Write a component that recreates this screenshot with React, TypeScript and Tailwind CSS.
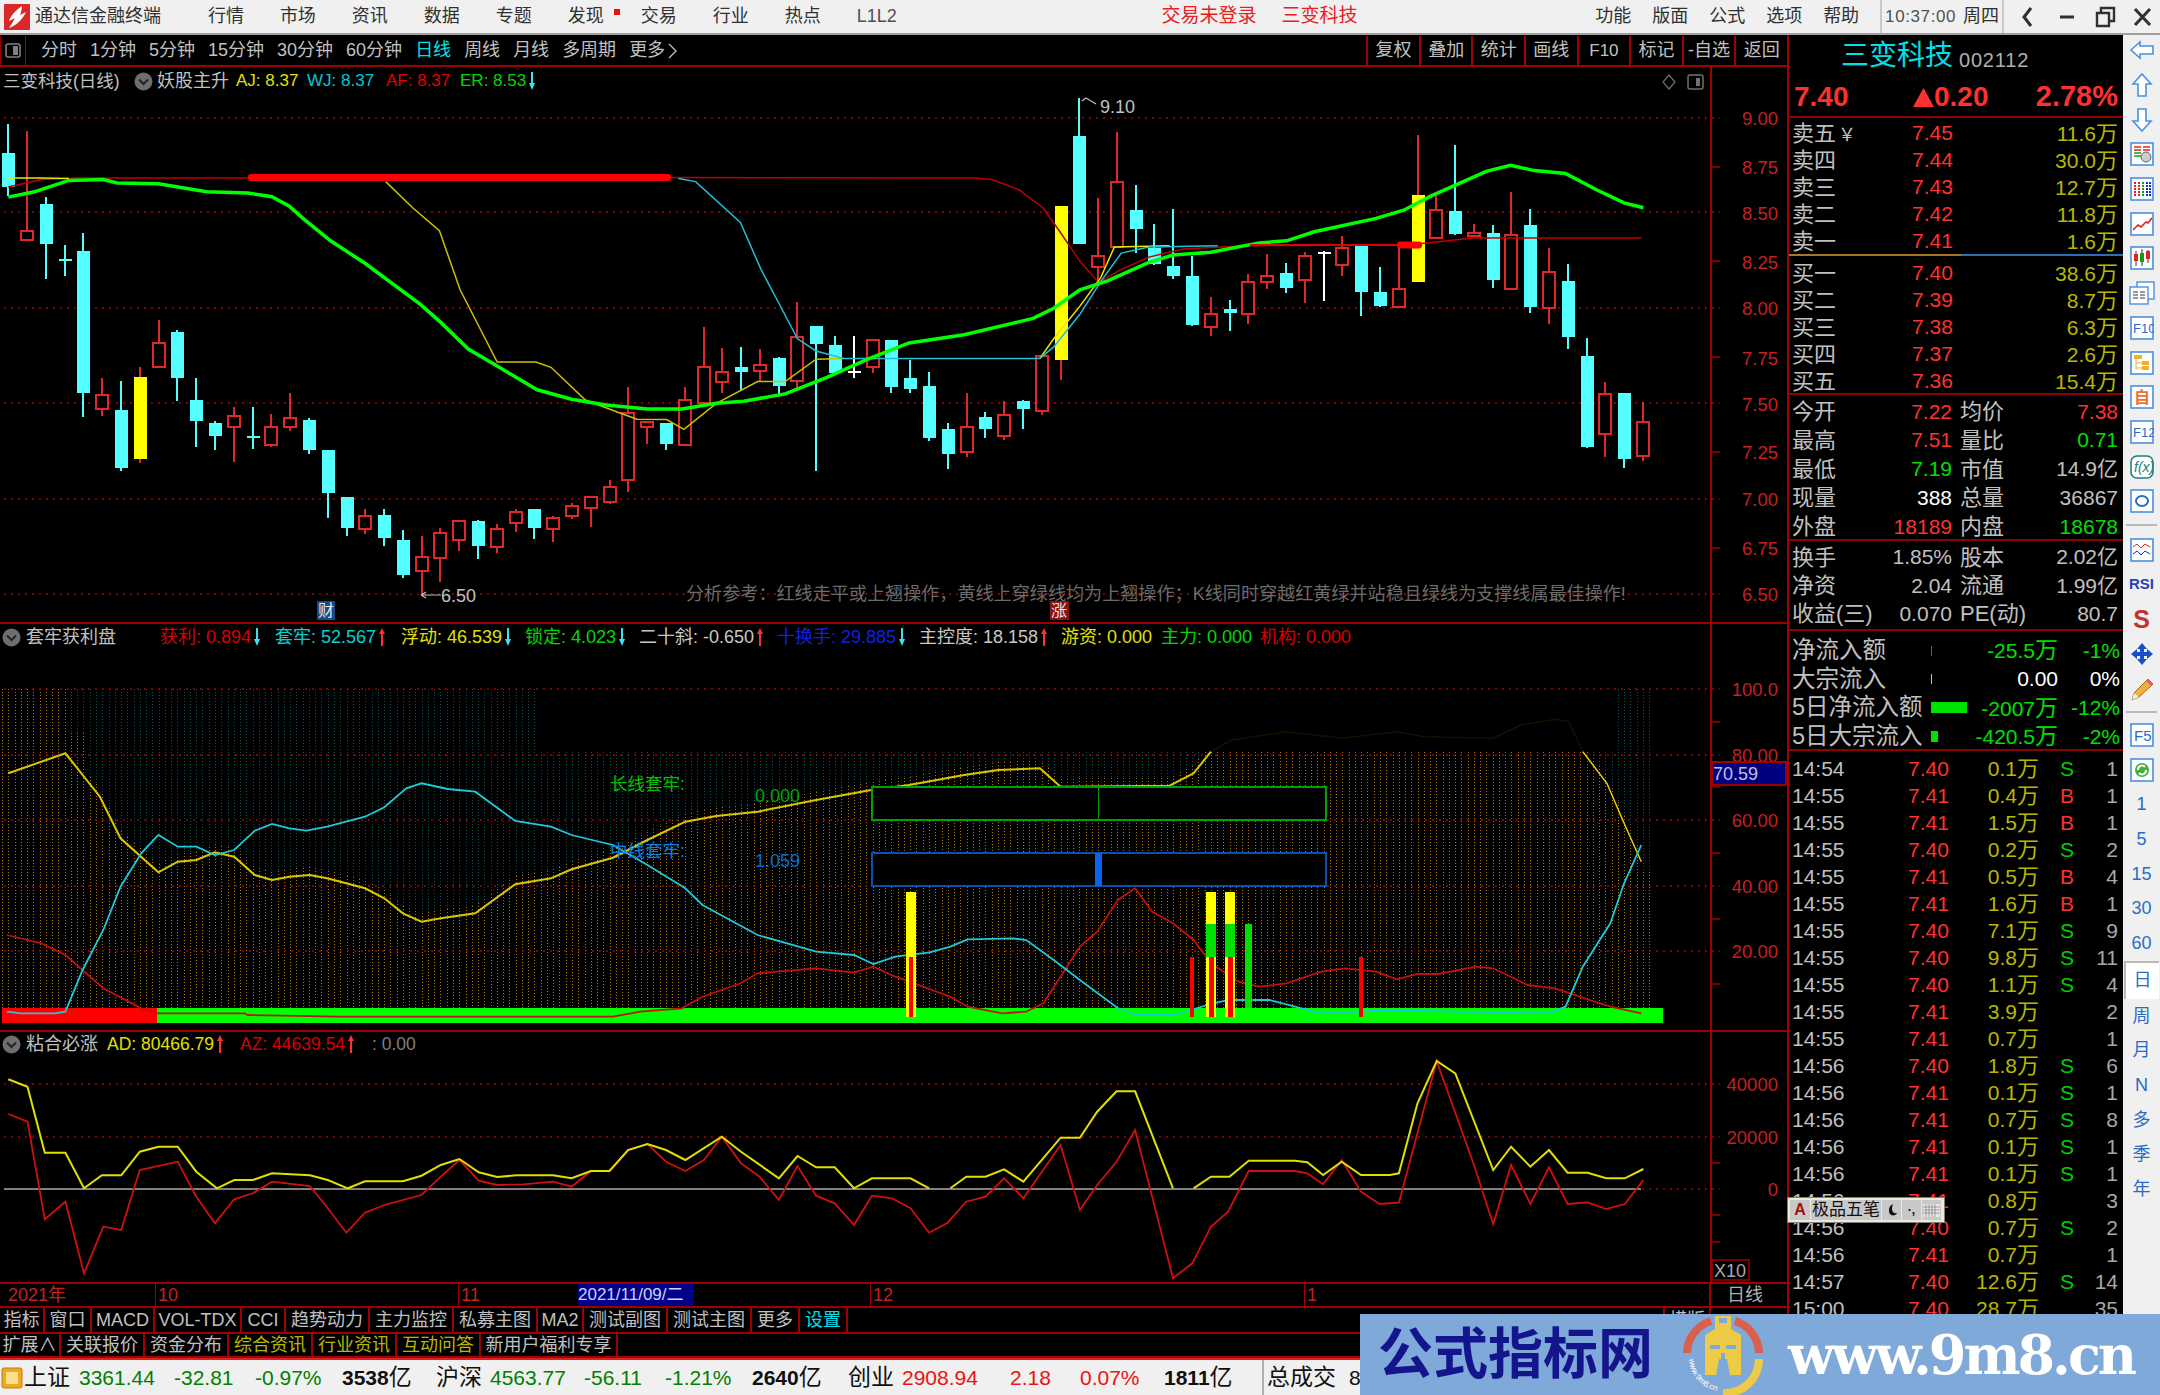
import React from 'react';

type Pt = [number, number];

const RED = '#a00000';
const STEP = 18.79;
const candleX = (i: number) => 8.3 + STEP * i;

// picked off the zoomed reference: x was shrunk by 1.452
const poly = (left: Pt[], right: Pt[], mapY: (y: number) => number) =>
    [
        ...left.map(([x, y]) => `${(x / 1.452).toFixed(1)},${mapY(y).toFixed(1)}`),
        ...right.map(([x, y]) => `${(1080 + x / 1.452).toFixed(1)},${mapY(y).toFixed(1)}`),
    ].join(' ');

const mainY = (y: number) => y / 2.45;
const subY = (y: number) => 620 + y / 3;
const lowY = (y: number) => 1030 + y / 3;

// type, high, body top, body bottom, low
const candles: [string, number, number, number, number][] = [
    ['c', 305, 375, 458, 480], ['r', 322, 567, 587, 587], ['c', 482, 500, 598, 683], ['c', 600, 635, 638, 677],
    ['c', 570, 614, 963, 1022], ['r', 926, 968, 1002, 1018], ['c', 934, 1004, 1147, 1153], ['y', 900, 923, 1125, 1135],
    ['r', 783, 840, 900, 900], ['c', 808, 813, 926, 982], ['c', 927, 979, 1032, 1095], ['c', 1032, 1037, 1069, 1103],
    ['r', 996, 1020, 1047, 1132], ['c', 996, 1067, 1070, 1100], ['r', 1015, 1046, 1090, 1094], ['r', 964, 1024, 1047, 1055],
    ['c', 1024, 1030, 1102, 1113], ['c', 1103, 1103, 1209, 1268], ['c', 1217, 1217, 1294, 1312], ['r', 1247, 1263, 1297, 1308],
    ['c', 1247, 1261, 1319, 1338], ['c', 1298, 1324, 1408, 1415], ['r', 1313, 1365, 1399, 1455], ['r', 1293, 1306, 1366, 1425],
    ['r', 1275, 1277, 1322, 1350], ['c', 1275, 1276, 1338, 1370], ['r', 1285, 1296, 1340, 1356], ['r', 1248, 1254, 1281, 1304],
    ['c', 1247, 1247, 1294, 1320], ['r', 1265, 1270, 1297, 1327], ['r', 1232, 1240, 1264, 1272], ['r', 1215, 1218, 1244, 1290],
    ['r', 1177, 1193, 1229, 1235], ['r', 948, 1012, 1175, 1205], ['r', 1035, 1035, 1047, 1088], ['c', 1036, 1037, 1088, 1102],
    ['r', 948, 980, 1090, 1093], ['r', 802, 899, 988, 990], ['r', 853, 912, 936, 962], ['c', 850, 900, 911, 955],
    ['r', 855, 894, 910, 937], ['c', 875, 876, 945, 965], ['r', 740, 825, 933, 950], ['c', 798, 798, 842, 1153],
    ['c', 823, 846, 915, 917], ['w', 823, 908, 911, 925], ['r', 832, 832, 900, 915], ['c', 832, 832, 948, 962],
    ['c', 882, 927, 952, 962], ['c', 912, 945, 1074, 1080], ['c', 1037, 1052, 1113, 1150], ['r', 964, 1046, 1108, 1120],
    ['c', 1010, 1022, 1051, 1073], ['r', 982, 1016, 1068, 1078], ['c', 980, 982, 1003, 1050], ['r', 872, 873, 1006, 1017],
    ['y', 504, 504, 882, 930], ['c', 240, 332, 598, 598], ['r', 485, 627, 655, 690], ['r', 323, 446, 605, 607],
    ['c', 453, 515, 562, 620], ['c', 548, 607, 647, 650], ['c', 512, 651, 677, 683], ['c', 627, 677, 797, 798],
    ['r', 728, 769, 800, 822], ['c', 735, 758, 768, 812], ['r', 672, 692, 770, 793], ['r', 622, 677, 690, 708],
    ['c', 645, 670, 706, 717], ['r', 617, 627, 685, 742], ['w', 615, 617, 620, 738], ['r', 577, 608, 650, 675],
    ['c', 602, 603, 716, 775], ['c', 655, 716, 750, 752], ['r', 600, 708, 752, 752], ['y', 330, 478, 690, 690],
    ['r', 478, 515, 583, 585], ['c', 356, 518, 573, 575], ['r', 548, 570, 578, 580], ['c', 552, 570, 686, 705],
    ['r', 470, 575, 708, 708], ['c', 512, 552, 753, 768], ['r', 608, 667, 755, 793], ['c', 648, 688, 826, 855],
    ['c', 828, 872, 1095, 1098], ['r', 937, 965, 1063, 1120], ['c', 964, 964, 1124, 1146], ['r', 985, 1035, 1118, 1130],
];

const greenL: Pt[] = [[12, 483], [50, 470], [100, 442], [150, 440], [170, 448], [230, 450], [300, 470], [360, 473], [395, 482], [420, 505], [440, 535], [480, 590], [530, 645], [610, 745], [640, 790], [680, 855], [720, 895], [780, 955], [830, 978], [880, 992], [940, 1002], [990, 1002], [1040, 988], [1080, 983], [1140, 965], [1200, 925], [1260, 880], [1320, 840], [1400, 820], [1500, 780], [1530, 755], [1568, 710]];
const greenR: Pt[] = [[40, 688], [100, 643], [135, 625], [190, 618], [260, 595], [300, 590], [340, 568], [430, 535], [470, 515], [510, 480], [550, 450], [590, 420], [625, 405], [660, 418], [705, 425], [750, 465], [790, 497], [818, 509]];
const redThinL: Pt[] = [[12, 458], [60, 440], [110, 436], [970, 435], [1415, 436], [1440, 440], [1480, 465], [1515, 510], [1540, 570], [1568, 640]];
const redThinR: Pt[] = [[27, 692], [60, 660], [100, 630], [150, 610], [240, 602], [460, 600], [505, 595], [570, 583], [815, 583]];
const yelMainL: Pt[] = [[12, 436], [60, 436], [100, 437]];
const yelMain2L: Pt[] = [[560, 445], [600, 510], [638, 565], [668, 710], [722, 887], [778, 887], [800, 900], [850, 980], [905, 1015], [925, 1027], [968, 1028], [993, 1052], [1040, 988], [1100, 935], [1140, 935], [1185, 880], [1225, 878]];
const yelMain3L: Pt[] = [[1510, 878], [1530, 830], [1568, 750]];
const yelMain3R: Pt[] = [[30, 680], [50, 605], [130, 602]];
const cyanMainL: Pt[] = [[985, 437], [1010, 445], [1075, 545], [1105, 660], [1130, 740], [1158, 830], [1185, 860], [1225, 878], [1510, 878], [1530, 850], [1568, 770]];
const cyanMainR: Pt[] = [[30, 690], [60, 620], [100, 605], [200, 602]];

const subYellowL: Pt[] = [[12, 460], [95, 400], [145, 530], [175, 655], [230, 757], [258, 725], [285, 720], [312, 697], [340, 710], [370, 765], [395, 780], [420, 770], [450, 765], [475, 775], [530, 805], [558, 835], [585, 880], [612, 905], [640, 895], [690, 880], [748, 793], [800, 775], [830, 748], [890, 713], [940, 660], [995, 605], [1040, 588], [1100, 575], [1185, 540], [1265, 510], [1320, 495], [1400, 465], [1450, 450], [1510, 445], [1540, 500]];
const subYellowR: Pt[] = [[130, 497], [165, 460], [190, 395]];
const subDarkR: Pt[] = [[190, 395], [220, 360], [300, 335], [380, 355], [460, 335], [500, 350], [600, 355], [640, 315], [690, 298], [710, 305], [730, 395]];
const subYellowR2: Pt[] = [[730, 395], [765, 490], [790, 610], [815, 725]];
const subCyanL: Pt[] = [[10, 1175], [30, 1180], [80, 1180], [95, 1175], [120, 1050], [150, 930], [175, 800], [205, 700], [230, 645], [258, 680], [285, 680], [312, 705], [340, 690], [370, 632], [395, 612], [420, 625], [445, 632], [475, 620], [530, 590], [558, 562], [590, 505], [612, 490], [650, 507], [690, 515], [748, 603], [800, 620], [830, 645], [890, 675], [940, 735], [995, 805], [1020, 855], [1100, 945], [1185, 995], [1240, 1005], [1268, 1032], [1300, 1010], [1350, 997], [1380, 980], [1405, 958], [1470, 955], [1490, 960], [1530, 1020], [1568, 1080]];
const subCyanR: Pt[] = [[55, 1165], [80, 1183], [140, 1183], [185, 1155], [215, 1140], [275, 1140], [350, 1180], [450, 1170], [540, 1175], [680, 1180], [705, 1160], [730, 1040], [770, 910], [790, 790], [815, 675]];
const subRedL: Pt[] = [[10, 945], [60, 970], [95, 1005], [150, 1105], [205, 1165], [230, 1180], [355, 1180], [360, 1185], [490, 1190], [890, 1190], [930, 1175], [990, 1165], [1020, 1130], [1075, 1090], [1100, 1060], [1185, 1045], [1240, 1058], [1268, 1040], [1300, 1070], [1340, 1100], [1380, 1130], [1405, 1160], [1455, 1180], [1490, 1175], [1515, 1150], [1568, 980]];
const subRedR: Pt[] = [[25, 935], [55, 840], [80, 805], [105, 875], [135, 910], [165, 960], [190, 1030], [230, 1085], [260, 1100], [300, 1090], [350, 1055], [385, 1045], [430, 1055], [460, 1078], [490, 1062], [520, 1062], [575, 1040], [600, 1045], [650, 1095], [690, 1105], [740, 1140], [770, 1160], [815, 1180]];

const lowYellowL: Pt[] = [[12, 148], [40, 170], [65, 368], [95, 368], [122, 475], [148, 436], [176, 436], [203, 365], [230, 350], [258, 350], [285, 425], [315, 475], [340, 450], [367, 450], [395, 430], [450, 436], [476, 450], [505, 475], [530, 454], [585, 454], [612, 437], [640, 405], [667, 387], [695, 427], [722, 441], [750, 436], [803, 436], [830, 445], [858, 423], [885, 423], [912, 360], [940, 342], [967, 360], [995, 390], [1048, 320], [1076, 365], [1131, 445], [1158, 378], [1185, 412], [1212, 412], [1240, 475], [1266, 445], [1322, 445], [1349, 475]];
const lowYellowM: Pt[] = [[1380, 475], [1403, 440], [1431, 440], [1458, 418], [1486, 455], [1540, 323], [1568, 323]];
const lowYellowR: Pt[] = [[25, 245], [53, 184], [80, 184], [135, 475]];
const lowYellowR2: Pt[] = [[165, 475], [190, 440], [217, 440], [245, 392], [312, 392], [330, 397], [353, 435], [380, 395], [408, 435], [450, 435], [463, 430], [490, 220], [518, 93], [545, 130], [600, 420], [626, 350], [654, 410], [681, 360], [708, 428], [737, 428], [764, 445], [791, 445], [818, 417]];
const lowRedL: Pt[] = [[12, 252], [40, 275], [65, 568], [95, 515], [122, 730], [150, 590], [176, 600], [203, 420], [258, 395], [285, 500], [312, 580], [340, 508], [367, 490], [395, 455], [450, 468], [476, 535], [503, 608], [530, 548], [558, 525], [612, 495], [640, 440], [667, 390], [695, 452], [722, 465], [760, 463], [803, 455], [830, 470], [858, 423], [885, 423], [912, 360], [940, 342], [967, 395], [995, 423], [1022, 390], [1048, 320], [1076, 400], [1103, 440], [1131, 510], [1158, 408], [1185, 497], [1212, 520], [1240, 585], [1266, 497], [1295, 505], [1322, 535], [1349, 608], [1376, 578], [1403, 515], [1431, 500], [1458, 445], [1486, 505], [1540, 345], [1568, 540]];
const lowRedR: Pt[] = [[25, 465], [53, 395], [80, 300], [135, 745], [163, 700], [190, 590], [215, 545], [245, 423], [312, 423], [330, 430], [353, 463], [380, 390], [408, 485], [435, 522], [463, 518], [518, 93], [573, 410], [600, 583], [626, 405], [654, 522], [681, 412], [708, 522], [737, 517], [764, 537], [791, 522], [818, 450]];

// yellow line of the middle panel in page coords, the bars stop at it
const subYellowAll: Pt[] = [
    ...subYellowL.map(([x, y]): Pt => [x / 1.452, subY(y)]),
    ...[...subYellowR, ...subDarkR, ...subYellowR2].map(([x, y]): Pt => [1080 + x / 1.452, subY(y)]),
];

const yellowAt = (x: number) => {
    for (let i = 1; i < subYellowAll.length; i++) {
        const [x0, y0] = subYellowAll[i - 1];
        const [x1, y1] = subYellowAll[i];
        if (x <= x1) return y0 + ((y1 - y0) * (x - x0)) / Math.max(x1 - x0, 1);
    }
    return 880;
};

const barColumns = Array.from({ length: 88 * 3 }, (_, n) => {
    const x = Math.round(candleX(Math.floor(n / 3)) + ((n % 3) - 1) * 6.26) + 0.5;
    let top = Math.round(Math.max(752, yellowAt(x) - 8));
    if (x < 70) top = 689;
    else if (x < 88) top = 733;
    let tealTop = 752;
    if (x < 537 || x > 1618) tealTop = 689;
    return { x, top, tealTop: x > 1590 && x < 1618 ? 752 : tealTop };
});

const Grid = ({ ys, ticks }: { ys: number[]; ticks: number[] }) => (
    <g>
        {ys.map(y => (
            <line key={y} x1={4} x2={1720} y1={y} y2={y} stroke="#b00000" strokeWidth={1.5} strokeDasharray="2 5" />
        ))}
        {ticks.map(y => (
            <line key={y} x1={1711} x2={1720} y1={y} y2={y} stroke={RED} strokeWidth={1.5} />
        ))}
        <line x1={1711} x2={1711} y1={0} y2={1400} stroke={RED} strokeWidth={2} />
    </g>
);

const AxisLabels = ({ items }: { items: [string, number][] }) => (
    <g fill="#c42020" fontSize={18.5} textAnchor="end">
        {items.map(([t, y]) => (
            <text key={t} x={1778} y={y + 7}>{t}</text>
        ))}
    </g>
);

const Arrow = ({ up }: { up?: boolean }) => (
    <svg width="8" height="20" viewBox="0 0 8 20" className="shrink-0 ml-[2px]">
        {up ? (
            <path d="M4 1 L7 7 H5 V19 H3 V7 H1 Z" fill="#ff3030" />
        ) : (
            <path d="M4 19 L7 12 H5 V1 H3 V12 H1 Z" fill="#40e0f0" />
        )}
    </svg>
);

const Collapse = () => (
    <svg width="19" height="19" viewBox="0 0 19 19" className="shrink-0">
        <circle cx="9.5" cy="9.5" r="9" fill="#6e6e6e" />
        <path d="M5 7.5 L9.5 12 L14 7.5" fill="none" stroke="#222" strokeWidth="2" />
    </svg>
);

const MainChart = () => (
    <svg width="1787" height="555" viewBox="0 67 1787 555" className="block">
        <Grid ys={[118, 212, 308, 403, 499, 594]} ticks={[167, 261, 357, 452, 548]} />
        <AxisLabels items={[['9.00', 118], ['8.75', 167], ['8.50', 213], ['8.25', 262], ['8.00', 308], ['7.75', 358], ['7.50', 404], ['7.25', 452], ['7.00', 499], ['6.75', 548], ['6.50', 594]]} />
        <g shapeRendering="crispEdges">
            {candles.map(([t, hi, top, bot, lo], i) => {
                const x = Math.round(candleX(i));
                const color = t === 'c' ? '#55ffff' : t === 'y' ? '#ffff00' : t === 'w' ? '#ffffff' : '#e02828';
                return (
                    <g key={i}>
                        <line x1={x} x2={x} y1={mainY(hi)} y2={mainY(lo)} stroke={t === 'y' ? '#e02828' : color} strokeWidth={1.5} />
                        {t === 'r' ? (
                            <rect x={x - 6} y={mainY(top)} width={12} height={mainY(bot) - mainY(top)} fill="#000" stroke={color} strokeWidth={2} />
                        ) : (
                            <rect x={x - 6.5} y={mainY(top)} width={13} height={Math.max(mainY(bot) - mainY(top), 2)} fill={color} />
                        )}
                    </g>
                );
            })}
        </g>
        <polyline points={poly(redThinL, redThinR, mainY)} fill="none" stroke="#c00000" strokeWidth={1.5} />
        <polyline points={poly(yelMainL, [], mainY)} fill="none" stroke="#e8e800" strokeWidth={1.5} />
        <polyline points={poly(yelMain2L, [], mainY)} fill="none" stroke="#d0c000" strokeWidth={1.5} />
        <polyline points={poly(yelMain3L, yelMain3R, mainY)} fill="none" stroke="#e8e800" strokeWidth={1.5} />
        <polyline points={poly(cyanMainL, cyanMainR, mainY)} fill="none" stroke="#20c0d8" strokeWidth={1.5} />
        <polyline points={poly(greenL, greenR, mainY)} fill="none" stroke="#00ff00" strokeWidth={3.5} />
        <rect x={248} y={174} width={423} height={7} rx={3} fill="#ff0000" />
        <rect x={1397} y={241.5} width={25} height={7} rx={3} fill="#ff0000" />
        <rect x={1250} y={244} width={147} height={2} fill="#e00000" />
        <path d="M1082 101 l4 -3 l10 6" fill="none" stroke="#c0c0c0" strokeWidth={1.2} />
        <text x={1100} y={113} fontSize={18} fill="#c0c0c0">9.10</text>
        <path d="M421 595 h20 M421 595 l5 -3 M421 595 l5 3" fill="none" stroke="#c0c0c0" strokeWidth={1.2} />
        <text x={441} y={602} fontSize={18} fill="#c0c0c0">6.50</text>
        <text x={686} y={600} fontSize={18.1} fill="#6b6b6b">分析参考：红线走平或上翘操作，黄线上穿绿线均为上翘操作；K线同时穿越红黄绿并站稳且绿线为支撑线属最佳操作!</text>
        <rect x={317} y={601} width={18} height={19} fill="#174a86" />
        <text x={318} y={616} fontSize={16} fill="#e8e8e8">财</text>
        <rect x={1050} y={601} width={19} height={19} fill="#8a1414" />
        <text x={1051} y={616} fontSize={16} fill="#e8e8e8">涨</text>
        <path d="M1669 75 l6 7 l-6 7 l-6 -7 Z" fill="none" stroke="#707070" strokeWidth={1.2} />
        <rect x={1688} y={75} width={15} height={14} rx={2} fill="none" stroke="#707070" strokeWidth={1.5} />
        <rect x={1696} y={78} width={4} height={8} fill="#707070" />
    </svg>
);

const SubChart = () => (
    <svg width="1787" height="406" viewBox="0 624 1787 406" className="block">
        <g shapeRendering="crispEdges">
            {barColumns.map(b => (
                <g key={b.x}>
                    <line x1={b.x} x2={b.x} y1={b.tealTop} y2={b.top} stroke="#0f5454" strokeWidth={1} strokeDasharray="1 2" />
                    <line x1={b.x} x2={b.x} y1={b.top} y2={1008} stroke="#b07400" strokeWidth={1} strokeDasharray="1 2" />
                </g>
            ))}
        </g>
        <Grid ys={[689, 755, 820, 886, 951]} ticks={[722, 787, 853, 919, 984]} />
        <AxisLabels items={[['100.0', 689], ['80.00', 755], ['60.00', 820], ['40.00', 886], ['20.00', 951]]} />
        <g shapeRendering="crispEdges">
            <rect x={2} y={1008} width={155} height={15} fill="#ff0000" />
            <rect x={157} y={1008} width={1506} height={15} fill="#00ff00" />
        </g>
        <polyline points={poly(subYellowL, subYellowR, subY)} fill="none" stroke="#d8c800" strokeWidth={2} />
        <polyline points={poly([], subDarkR, subY)} fill="none" stroke="#121200" strokeWidth={1.5} />
        <polyline points={poly([], subYellowR2, subY)} fill="none" stroke="#e0d000" strokeWidth={1.5} />
        <polyline points={poly(subRedL, subRedR, subY)} fill="none" stroke="#c01010" strokeWidth={1.8} />
        <polyline points={poly(subCyanL, subCyanR, subY)} fill="none" stroke="#20c8d8" strokeWidth={1.8} />
        <g shapeRendering="crispEdges">
            <rect x={906} y={892} width={10} height={125} fill="#ffff00" />
            <rect x={909} y={957} width={4} height={60} fill="#ff0000" />
            <rect x={1206} y={892} width={10} height={125} fill="#ffff00" />
            <rect x={1206} y={924} width={10} height={33} fill="#00e000" />
            <rect x={1209} y={957} width={5} height={60} fill="#ff0000" />
            <rect x={1225} y={892} width={10} height={125} fill="#ffff00" />
            <rect x={1225} y={924} width={10} height={33} fill="#00e000" />
            <rect x={1228} y={957} width={5} height={60} fill="#ff0000" />
            <rect x={1245} y={924} width={7} height={84} fill="#00e000" />
            <rect x={1190} y={957} width={4} height={60} fill="#ff0000" />
            <rect x={1359} y={957} width={4} height={60} fill="#ff0000" />
            <rect x={872} y={787} width={454} height={33} fill="#000" stroke="#00a000" strokeWidth={2} />
            <rect x={1098} y={787} width={1} height={33} fill="#00a000" />
            <rect x={872} y={853} width={454} height={33} fill="#000" stroke="#0a50b0" strokeWidth={2} />
            <rect x={1095} y={853} width={7} height={33} fill="#0a64f0" />
            <rect x={1712} y={762} width={74} height={23} fill="#000080" stroke={RED} strokeWidth={1.5} />
        </g>
        <text x={1713} y={780} fontSize={18} fill="#c0c0e0">70.59</text>
        <text x={610} y={790} fontSize={17.5} fill="#00c000">长线套牢:</text>
        <text x={610} y={857} fontSize={17.5} fill="#0a80e0">中线套牢:</text>
        <text x={755} y={802} fontSize={18} fill="#00a800">0.000</text>
        <text x={755} y={867} fontSize={18} fill="#0a6cc8">1.059</text>
    </svg>
);

const LowChart = () => (
    <svg width="1787" height="250" viewBox="0 1032 1787 250" className="block">
        <Grid ys={[1084, 1137, 1189]} ticks={[1163, 1215, 1242]} />
        <AxisLabels items={[['40000', 1084], ['20000', 1137], ['0', 1189]]} />
        <line x1={4} x2={1641} y1={1189} y2={1189} stroke="#808080" strokeWidth={2} />
        <polyline points={poly(lowRedL, lowRedR, lowY)} fill="none" stroke="#d01010" strokeWidth={1.8} />
        <polyline points={poly(lowYellowL, [], lowY)} fill="none" stroke="#e0e000" strokeWidth={2} />
        <polyline points={poly(lowYellowM, lowYellowR, lowY)} fill="none" stroke="#e0e000" strokeWidth={2} />
        <polyline points={poly([], lowYellowR2, lowY)} fill="none" stroke="#e0e000" strokeWidth={2} />
        <rect x={1712} y={1260} width={37} height={20} fill="#000" stroke={RED} strokeWidth={1.5} />
        <text x={1714} y={1277} fontSize={18} fill="#a8a8a8">X10</text>
    </svg>
);

const TABS_ONE = [
    { t: '指标', w: 'w-[45px]' }, { t: '窗口', w: 'w-[47px]' }, { t: 'MACD', w: 'w-[63px]' }, { t: 'VOL-TDX', w: 'w-[87px]' },
    { t: 'CCI', w: 'w-[44px]' }, { t: '趋势动力', w: 'w-[84px]' }, { t: '主力监控', w: 'w-[84px]' }, { t: '私募主图', w: 'w-[84px]' },
    { t: 'MA2', w: 'w-[46px]' }, { t: '测试副图', w: 'w-[84px]' }, { t: '测试主图', w: 'w-[84px]' }, { t: '更多', w: 'w-[48px]' },
];

const TABS_TWO = [
    { t: '扩展∧', w: 'w-[61px]', c: 'text-[#c0c0c0]' }, { t: '关联报价', w: 'w-[84px]', c: 'text-[#c0c0c0]' },
    { t: '资金分布', w: 'w-[84px]', c: 'text-[#c0c0c0]' }, { t: '综合资讯', w: 'w-[84px]', c: 'text-[#b8b800]' },
    { t: '行业资讯', w: 'w-[84px]', c: 'text-[#b8b800]' }, { t: '互动问答', w: 'w-[84px]', c: 'text-[#b8b800]' },
    { t: '新用户福利专享', w: 'w-[137px]', c: 'text-[#c0c0c0]' },
];

const PERIODS = ['分时', '1分钟', '5分钟', '15分钟', '30分钟', '60分钟'];
const PERIODS_B = ['周线', '月线', '多周期'];
const TOOL_BTNS = ['复权', '叠加', '统计', '画线', 'F10', '标记', '-自选', '返回'];

const SELL: [string, string, string][] = [['卖五', '7.45', '11.6'], ['卖四', '7.44', '30.0'], ['卖三', '7.43', '12.7'], ['卖二', '7.42', '11.8'], ['卖一', '7.41', '1.6']];
const BUY: [string, string, string][] = [['买一', '7.40', '38.6'], ['买二', '7.39', '8.7'], ['买三', '7.38', '6.3'], ['买四', '7.37', '2.6'], ['买五', '7.36', '15.4']];

const TICKS: [string, string, string, string, string][] = [
    ['14:54', '7.40', '0.1', 'S', '1'], ['14:55', '7.41', '0.4', 'B', '1'], ['14:55', '7.41', '1.5', 'B', '1'],
    ['14:55', '7.40', '0.2', 'S', '2'], ['14:55', '7.41', '0.5', 'B', '4'], ['14:55', '7.41', '1.6', 'B', '1'],
    ['14:55', '7.40', '7.1', 'S', '9'], ['14:55', '7.40', '9.8', 'S', '11'], ['14:55', '7.40', '1.1', 'S', '4'],
    ['14:55', '7.41', '3.9', '', '2'], ['14:55', '7.41', '0.7', '', '1'], ['14:56', '7.40', '1.8', 'S', '6'],
    ['14:56', '7.41', '0.1', 'S', '1'], ['14:56', '7.41', '0.7', 'S', '8'], ['14:56', '7.41', '0.1', 'S', '1'],
    ['14:56', '7.41', '0.1', 'S', '1'], ['14:56', '7.41', '0.8', '', '3'], ['14:56', '7.40', '0.7', 'S', '2'],
    ['14:56', '7.41', '0.7', '', '1'], ['14:57', '7.40', '12.6', 'S', '14'], ['15:00', '7.40', '28.7', '', '35'],
];

const StatRow = ({ a, b, c, d, bc = 'text-[#ff3030]', dc = 'text-[#c0c0c0]', h = 'h-[28.8px]' }: { a: string; b: string; c: string; d: string; bc?: string; dc?: string; h?: string }) => (
    <div className={`flex items-center ${h} pt-[4px] pl-[3px] pr-[5px]`}>
        <span className="w-[100px] text-[22px] text-[#c0c0c0] whitespace-nowrap">{a}</span>
        <span className={`w-[60px] text-right text-[21px] ${bc}`}>{b}</span>
        <span className="ml-[8px] text-[22px] text-[#c0c0c0] whitespace-nowrap">{c}</span>
        <span className={`ml-auto text-[21px] whitespace-nowrap ${dc}`}>{d}</span>
    </div>
);

const Wan = ({ children }: { children: React.ReactNode }) => (
    <span>{children}<span className="text-[22px]">万</span></span>
);

const OrderRow = ({ r, tag }: { r: [string, string, string]; tag?: string }) => (
    <div className="flex items-center h-[27px] pt-[3px] pl-[3px] pr-[5px]">
        <span className="w-[120px] text-[22px] text-[#c0c0c0] whitespace-nowrap">
            {r[0]}{tag && <span className="text-[18px] ml-[2px]">{tag}</span>}
        </span>
        <span className="text-[21px] text-[#ff3030]">{r[1]}</span>
        <span className="ml-auto text-[21px] text-[#b8b800]"><Wan>{r[2]}</Wan></span>
    </div>
);

const FlowRow = ({ label, bar, val, pct, col }: { label: string; bar: React.ReactNode; val: React.ReactNode; pct: string; col: string }) => (
    <div className="flex items-center h-[28.7px] pt-[4px] pl-[3px] pr-[3px]">
        <span className="w-[139px] text-[23.5px] text-[#c0c0c0] whitespace-nowrap">{label}</span>
        <span className="w-[40px]">{bar}</span>
        <span className={`w-[87px] text-right text-[21px] whitespace-nowrap ${col}`}>{val}</span>
        <span className={`ml-auto text-[21px] ${col}`}>{pct}</span>
    </div>
);

const QuotePanel = () => (
    <div className="w-[336px] h-full shrink-0 border-l-2 border-[#a00000] bg-black overflow-hidden">
        <div className="flex items-end h-[42px] pl-[52px] pb-[7px]">
            <span className="text-[28px] leading-none text-[#00e0e8]">三变科技</span>
            <span className="ml-[6px] text-[20px] leading-none tracking-[0.8px] text-[#b0b0b0]">002112</span>
        </div>
        <div className="flex items-center h-[41px] pl-[5px] pr-[5px] text-[28px] font-bold text-[#ff3030] border-b-2 border-[#8b0000]">
            <span className="w-[119px]">7.40</span>
            <span className="flex items-center">
                <svg width="21" height="20" viewBox="0 0 21 20"><path d="M10.5 1 L21 20 H0 Z" fill="#ff3030" /></svg>0.20
            </span>
            <span className="ml-auto text-[29px]">2.78%</span>
        </div>
        {SELL.map((r, i) => <OrderRow key={r[0]} r={r} tag={i === 0 ? '￥' : undefined} />)}
        <div className="flex h-[2px] mt-[1px] mb-[2px]">
            <div className="w-[172px] bg-[#a87820]" />
            <div className="flex-1 bg-[#2870b0]" />
        </div>
        {BUY.map(r => <OrderRow key={r[0]} r={r} />)}
        <div className="border-b-2 border-[#8b0000] h-[2px]" />
        <StatRow a="今开" b="7.22" c="均价" d="7.38" dc="text-[#ff3030]" />
        <StatRow a="最高" b="7.51" c="量比" d="0.71" dc="text-[#00e000]" />
        <StatRow a="最低" b="7.19" bc="text-[#00e000]" c="市值" d="14.9亿" />
        <StatRow a="现量" b="388" bc="text-white" c="总量" d="36867" />
        <StatRow a="外盘" b="18189" c="内盘" d="18678" dc="text-[#00e000]" />
        <div className="border-b-2 border-[#8b0000] h-[1px]" />
        <StatRow a="换手" b="1.85%" bc="text-[#c0c0c0]" c="股本" d="2.02亿" h="h-[28.4px]" />
        <StatRow a="净资" b="2.04" bc="text-[#c0c0c0]" c="流通" d="1.99亿" h="h-[28.4px]" />
        <StatRow a="收益(三)" b="0.070" bc="text-[#c0c0c0]" c="PE(动)" d="80.7" h="h-[28.4px]" />
        <div className="border-b-2 border-[#8b0000] h-[5px]" />
        <div className="h-[3px]" />
        <FlowRow label="净流入额" bar={<div className="w-[1px] h-[10px] bg-[#00a000]" />} val={<span>-25.5<span className="text-[23px]">万</span></span>} pct="-1%" col="text-[#00e000]" />
        <FlowRow label="大宗流入" bar={<div className="w-[1px] h-[10px] bg-[#c0c0c0]" />} val="0.00" pct="0%" col="text-white" />
        <FlowRow label="5日净流入额" bar={<div className="w-[36px] h-[11px] bg-[#00e000]" />} val={<span>-2007<span className="text-[23px]">万</span></span>} pct="-12%" col="text-[#00e000]" />
        <FlowRow label="5日大宗流入" bar={<div className="w-[7px] h-[11px] bg-[#00e000]" />} val={<span>-420.5<span className="text-[23px]">万</span></span>} pct="-2%" col="text-[#00e000]" />
        <div className="border-b-2 border-[#8b0000] h-[1px] mb-[2px]" />
        {TICKS.map((r, i) => (
            <div key={i} className="flex items-center h-[27px] pt-[4px] pl-[3px] pr-[5px] text-[21px]">
                <span className="w-[116px] text-[#c0c0c0]">{r[0]}</span>
                <span className="w-[40px] text-[#ff3030]">{r[1]}</span>
                <span className="w-[91px] text-right text-[#b8b800] whitespace-nowrap"><Wan>{r[2]}</Wan></span>
                <span className={`w-[33px] pl-[21px] ${r[3] === 'S' ? 'text-[#00d000]' : 'text-[#ff3030]'}`}>{r[3]}</span>
                <span className="ml-auto text-[#a8a8a8]">{r[4]}</span>
            </div>
        ))}
    </div>
);

const Frame = ({ children, stroke = '#4a90e0' }: { children?: React.ReactNode; stroke?: string }) => (
    <svg width="24" height="24" viewBox="0 0 24 24">
        <rect x="1" y="1" width="22" height="22" fill="#fff" stroke={stroke} strokeWidth="1.6" />
        {children}
    </svg>
);

const Bare = ({ children }: { children: React.ReactNode }) => (
    <svg width="26" height="26" viewBox="0 0 26 26">{children}</svg>
);

const ArrowShape = ({ d }: { d: string }) => (
    <Bare><path d={d} fill="#fff" stroke="#4a90e0" strokeWidth="1.6" /></Bare>
);

const ToolCell = ({ children }: { children: React.ReactNode }) => (
    <div className="flex items-center justify-center h-[34.7px]">{children}</div>
);

const NumCell = ({ children }: { children: React.ReactNode }) => (
    <div className="flex items-center justify-center h-[34.7px] text-[18px] text-[#2a6cc4]">{children}</div>
);

const ToolBar = () => (
    <div className="flex-1 h-full bg-[#f0f0f0] overflow-hidden">
        <div className="-mt-[2px]">
            <ToolCell><ArrowShape d="M2 13 L11 5 V9 H24 V17 H11 V21 Z" /></ToolCell>
            <ToolCell><ArrowShape d="M13 2 L22 12 H17 V24 H9 V12 H4 Z" /></ToolCell>
            <ToolCell><ArrowShape d="M13 24 L22 14 H17 V2 H9 V14 H4 Z" /></ToolCell>
            <ToolCell><Frame><path d="M4 5h7M13 5h7M4 8h7M13 8h7" stroke="#e02020" strokeWidth="1.5" /><path d="M4 11h7M4 14h7" stroke="#10a010" strokeWidth="1.5" /><circle cx="16" cy="15" r="5" fill="#ccc" stroke="#666" /></Frame></ToolCell>
            <ToolCell><Frame><path d="M5 5v14M9 5v14" stroke="#e02020" strokeWidth="2" strokeDasharray="2 1" /><path d="M13 5v14" stroke="#10a010" strokeWidth="2" strokeDasharray="2 1" /><path d="M17 5v14M20 5v14" stroke="#1030d0" strokeWidth="2" strokeDasharray="2 1" /></Frame></ToolCell>
            <ToolCell><Frame><path d="M3 18 L8 13 L11 15 L16 10 L18 11 L22 6" fill="none" stroke="#e02020" strokeWidth="1.6" /></Frame></ToolCell>
            <ToolCell><Frame><path d="M6 5v15M12 3v17M18 4v13" stroke="#333" /><rect x="4" y="8" width="4" height="7" fill="#e02020" /><rect x="10" y="7" width="4" height="9" fill="#10a010" /><rect x="16" y="5" width="4" height="8" fill="#e02020" /></Frame></ToolCell>
            <ToolCell><Bare><rect x="8" y="2" width="17" height="17" fill="#fff" stroke="#4a90e0" strokeWidth="1.4" /><rect x="1" y="7" width="18" height="17" fill="#fff" stroke="#4a90e0" strokeWidth="1.4" /><path d="M4 12h5M11 12h5M4 15h5M11 15h5M4 18h5M11 18h5" stroke="#777" strokeWidth="1.3" /></Bare></ToolCell>
            <ToolCell><Frame><text x="3" y="17" fontSize="13" fill="#2a6cc4">F10</text></Frame></ToolCell>
            <ToolCell><Frame><rect x="4" y="4" width="8" height="4" fill="#f0b030" /><path d="M6 8v11M6 12h6M6 17h6" stroke="#f0b030" /><rect x="12" y="10" width="7" height="4" fill="#f0b030" /><rect x="12" y="15" width="7" height="4" fill="#f0b030" /></Frame></ToolCell>
            <ToolCell><Frame><text x="4" y="18" fontSize="16" fontWeight="700" fill="#f07030">自</text></Frame></ToolCell>
            <ToolCell><Frame><text x="3" y="17" fontSize="13" fill="#2a6cc4">F12</text></Frame></ToolCell>
            <ToolCell><Bare><rect x="2" y="2" width="22" height="22" rx="6" fill="#fff" stroke="#208080" strokeWidth="1.6" /><text x="5" y="18" fontSize="14" fontStyle="italic" fill="#208080">f(x)</text></Bare></ToolCell>
            <ToolCell><Frame><ellipse cx="12" cy="12" rx="6" ry="5" fill="none" stroke="#2a6cc4" strokeWidth="2" /></Frame></ToolCell>
            <div className="h-[2px] mx-[3px] my-[5px] bg-[#b8b8b8]" />
            <div className="h-[2px]" />
            <ToolCell><Frame><path d="M3 9 L7 6 L11 10 L15 6 L20 9" fill="none" stroke="#e02020" /><path d="M3 16 L7 13 L11 17 L15 13 L20 16" fill="none" stroke="#1030d0" /></Frame></ToolCell>
            <ToolCell><span className="text-[15px] font-bold text-[#2a40b0]">RSI</span></ToolCell>
            <ToolCell><span className="text-[25px] font-bold text-[#c83030]">S</span></ToolCell>
            <ToolCell><Bare><path d="M13 2 L18 8 H15 V11 H18 V8 L24 13 L18 18 V15 H15 V18 H18 L13 24 L8 18 H11 V15 H8 V18 L2 13 L8 8 V11 H11 V8 H8 Z" fill="#1650c8" /></Bare></ToolCell>
            <ToolCell><Bare><path d="M3 24 L5 17 L19 3 L24 8 L10 21 Z" fill="#f0b040" stroke="#a06818" /><path d="M3 24 L5 17 L10 21 Z" fill="#eee" /><path d="M19 3 L24 8 L22 10 L17 5 Z" fill="#e06060" /></Bare></ToolCell>
            <div className="h-[2px] mx-[3px] my-[5px] bg-[#b8b8b8]" />
            <ToolCell><Frame><text x="4" y="18" fontSize="15" fill="#2a6cc4">F5</text></Frame></ToolCell>
            <ToolCell><Frame><circle cx="12" cy="12" r="7" fill="#40b040" /><path d="M8 12a4 4 0 0 1 7-3M16 12a4 4 0 0 1-7 3" fill="none" stroke="#fff" strokeWidth="2" /></Frame></ToolCell>
            {['1', '5', '15', '30', '60'].map(t => <NumCell key={t}>{t}</NumCell>)}
            <div className="flex items-center justify-center h-[38px] mx-[1px] text-[18px] text-[#2a6cc4] bg-white border-t-2 border-l-2 border-[#b8b8b8]">日</div>
            {['周', '月', 'N', '多', '季', '年'].map(t => <NumCell key={t}>{t}</NumCell>)}
        </div>
    </div>
);

const LegendItem = ({ w, label, value, color, up }: { w: string; label: string; value: string; color: string; up?: boolean }) => (
    <span className={`flex items-center shrink-0 whitespace-nowrap ${w} ${color}`}>
        {label}: {value}<Arrow up={up} />
    </span>
);

const PlainLegend = ({ w, label, value, color }: { w: string; label: string; value: string; color: string }) => (
    <span className={`shrink-0 whitespace-nowrap ${w} ${color}`}>{label}: {value}</span>
);

export default function App() {
    return (
        <div className="relative w-[2160px] h-[1395px] flex flex-col overflow-hidden bg-black font-['Liberation_Sans','Noto_Sans_CJK_SC',sans-serif]">
            {/* title bar */}
            <div className="flex items-center h-[35px] shrink-0 bg-[#f0f0f0] border-b-2 border-[#a0a0a0] text-[18px] text-[#303030]">
                <svg width="26" height="26" viewBox="0 0 26 26" className="ml-[4px] mr-[5px] shrink-0">
                    <rect width="26" height="26" rx="1" fill="#d8282a" />
                    <path d="M18 2 C12 6 7 11 5 17 L11 14 C9 18 7 21 5 24 C13 21 19 15 22 8 L16 11 C17 8 18 5 18 2 Z" fill="#fff" />
                </svg>
                <span className="w-[173px] text-[#303030]">通达信金融终端</span>
                {['行情', '市场', '资讯', '数据', '专题'].map(t => <span key={t} className="w-[72px]">{t}</span>)}
                <span className="relative w-[73px]">发现<span className="absolute left-[46px] top-[6px] w-[6px] h-[6px] bg-[#e81010]" /></span>
                {['交易', '行业', '热点'].map(t => <span key={t} className="w-[72px]">{t}</span>)}
                <span className="w-[305px] text-[#505050]">L1L2</span>
                <span className="w-[120px] text-[19px] text-[#e82020]">交易未登录</span>
                <span className="w-[314px] text-[19px] text-[#e82020]">三变科技</span>
                {['功能', '版面', '公式', '选项', '帮助'].map(t => <span key={t} className="w-[57px]">{t}</span>)}
                <span className="flex items-center justify-between w-[124px] h-full px-[3px] border-x-2 border-[#c8c8c8]">
                    <span className="text-[17px] tracking-[0.6px] text-[#505050]">10:37:00</span>
                    <span>周四</span>
                </span>
                <svg width="156" height="30" viewBox="0 0 156 30" className="shrink-0">
                    <path d="M27 6 L20 15 L27 24" fill="none" stroke="#303030" strokeWidth="3" />
                    <path d="M56 15 H70" stroke="#303030" strokeWidth="3" />
                    <path d="M93 11 H105 V24 H93 Z M97 11 V6 H110 V19 H105" fill="none" stroke="#303030" strokeWidth="2.4" />
                    <path d="M131 7 L146 23 M146 7 L131 23" stroke="#303030" strokeWidth="3" />
                </svg>
            </div>

            <div className="flex h-[1323px] shrink-0">
                <div className="flex flex-col w-[1787px] shrink-0">
                    {/* period toolbar */}
                    <div className="flex items-center h-[32px] pt-[1px] shrink-0 border-b-2 border-[#a00000] text-[18px] text-[#c0c0c0]">
                        <span className="flex items-center justify-center w-[26px] h-full border-x border-[#a00000] shrink-0">
                            <svg width="16" height="15" viewBox="0 0 16 15"><rect x="1" y="1" width="14" height="13" rx="2" fill="none" stroke="#808080" strokeWidth="1.6" /><rect x="8" y="3" width="5" height="9" fill="#808080" /></svg>
                        </span>
                        <span className="flex items-center gap-[13px] ml-[15px]">
                            {PERIODS.map(t => <span key={t}>{t}</span>)}
                            <span className="text-[#00e0e8]">日线</span>
                            {PERIODS_B.map(t => <span key={t}>{t}</span>)}
                            <span className="flex items-center gap-[3px]">
                                更多
                                <svg width="9" height="16" viewBox="0 0 9 16"><path d="M1 1 L8 8 L1 15" fill="none" stroke="#c0c0c0" strokeWidth="1.3" /></svg>
                            </span>
                        </span>
                        <span className="flex ml-auto h-full">
                            {TOOL_BTNS.map((t, i) => (
                                <span key={t} className={`flex items-center justify-center w-[52.6px] border-l-2 border-[#a00000] ${i === 4 ? 'text-[17px]' : ''}`}>{t}</span>
                            ))}
                        </span>
                    </div>

                    {/* main k-line panel */}
                    <div className="relative h-[555px] shrink-0">
                        <MainChart />
                        <div className="absolute left-[3px] top-0 flex items-center h-[28px] text-[17px] text-[#c0c0c0]">
                            <span className="w-[131px] whitespace-nowrap text-[17.5px]">三变科技(日线)</span>
                            <Collapse />
                            <span className="w-[79px] ml-[4px] text-[18px] whitespace-nowrap">妖股主升</span>
                            <PlainLegend w="w-[71px]" label="AJ" value="8.37" color="text-[#e0e000]" />
                            <PlainLegend w="w-[79px]" label="WJ" value="8.37" color="text-[#00c8d8]" />
                            <PlainLegend w="w-[74px]" label="AF" value="8.37" color="text-[#e00000]" />
                            <LegendItem w="w-[90px]" label="ER" value="8.53" color="text-[#00d800]" />
                        </div>
                    </div>

                    {/* trapped / profit panel */}
                    <div className="relative h-[408px] shrink-0 border-t-2 border-[#a00000]">
                        <SubChart />
                        <div className="absolute left-[2px] top-0 flex items-center h-[26px] text-[18px]">
                            <Collapse />
                            <span className="w-[134px] ml-[5px] text-[18px] text-[#c0c0c0] whitespace-nowrap">套牢获利盘</span>
                            <LegendItem w="w-[115px]" label="获利" value="0.894" color="text-[#d80000]" />
                            <LegendItem w="w-[126px]" label="套牢" value="52.567" color="text-[#00d0d8]" up />
                            <LegendItem w="w-[124px]" label="浮动" value="46.539" color="text-[#e0e000]" />
                            <LegendItem w="w-[114px]" label="锁定" value="4.023" color="text-[#00d800]" />
                            <LegendItem w="w-[138px]" label="二十斜" value="-0.650" color="text-[#c8c8c8]" up />
                            <LegendItem w="w-[142px]" label="十换手" value="29.885" color="text-[#1020e0]" />
                            <LegendItem w="w-[142px]" label="主控度" value="18.158" color="text-[#c8c8c8]" up />
                            <PlainLegend w="w-[100px]" label="游资" value="0.000" color="text-[#e0e000]" />
                            <PlainLegend w="w-[99px]" label="主力" value="0.000" color="text-[#00d800]" />
                            <PlainLegend w="w-[100px]" label="机构" value="0.000" color="text-[#d80000]" />
                        </div>
                    </div>

                    {/* third indicator panel */}
                    <div className="relative h-[252px] shrink-0 border-t-2 border-[#a00000]">
                        <LowChart />
                        <div className="absolute left-[2px] top-0 flex items-center h-[24px] text-[17.5px]">
                            <Collapse />
                            <span className="w-[81px] ml-[5px] text-[18px] text-[#c0c0c0] whitespace-nowrap">粘合必涨</span>
                            <LegendItem w="w-[133px]" label="AD" value="80466.79" color="text-[#e0e000]" up />
                            <LegendItem w="w-[132px]" label="AZ" value="44639.54" color="text-[#d80000]" up />
                            <span className="text-[#808080] whitespace-nowrap">: 0.00</span>
                        </div>
                    </div>

                    {/* date axis */}
                    <div className="relative flex h-[24px] shrink-0 border-t-2 border-[#a00000] text-[18px] leading-[22px] text-[#c42020]">
                        <span className="w-[156px] pl-[8px] border-r border-[#a00000]">2021年</span>
                        <span className="w-[303px] pl-[2px] border-r border-[#a00000]">10</span>
                        <span className="w-[412px] pl-[2px] border-r border-[#a00000]">11</span>
                        <span className="w-[434px] pl-[2px] border-r border-[#a00000]">12</span>
                        <span className="w-[406px] pl-[2px] border-r-2 border-[#a00000]">1</span>
                        <span className="flex-1 pl-[16px] text-[#b0b0b0]">日线</span>
                        <span className="absolute left-[578px] top-0 w-[116px] h-[22px] bg-[#000088] text-[#d0d0ff] text-[17px] whitespace-nowrap">2021/11/09/二</span>
                    </div>

                    {/* indicator tabs */}
                    <div className="flex h-[26px] shrink-0 border-t-2 border-[#a00000] text-[18px] leading-[24px] text-[#c0c0c0]">
                        {TABS_ONE.map(t => (
                            <span key={t.t} className={`${t.w} text-center border-r-2 border-[#a00000] whitespace-nowrap`}>{t.t}</span>
                        ))}
                        <span className="w-[48px] text-center border-r-2 border-[#a00000] text-[#00e0e8]">设置</span>
                        <span className="w-[817px] border-r-2 border-[#a00000]" />
                        <span className="w-[46px] text-center border-r-2 border-[#a00000]">横版</span>
                        <span className="flex-1" />
                    </div>
                    <div className="flex h-[26px] shrink-0 border-t-2 border-b-2 border-[#a00000] text-[18px] leading-[22px]">
                        {TABS_TWO.map(t => (
                            <span key={t.t} className={`${t.w} ${t.c} text-center border-r-2 border-[#a00000] whitespace-nowrap`}>{t.t}</span>
                        ))}
                    </div>
                </div>
                <QuotePanel />
                <ToolBar />
            </div>

            {/* index ticker */}
            <div className="flex items-center h-[37px] shrink-0 bg-[#f0f0f0] border-t-2 border-[#e02020] text-[21px] text-[#101010] whitespace-nowrap">
                <svg width="24" height="26" viewBox="0 0 24 26" className="shrink-0">
                    <rect x="2" y="3" width="20" height="20" rx="2" fill="#f0a820" stroke="#c08010" />
                    <rect x="6" y="7" width="12" height="12" fill="#f8e090" />
                </svg>
                <span className="w-[55px] text-[23px]">上证</span>
                <span className="w-[95px] text-[#008000]">3361.44</span>
                <span className="w-[81px] text-[#008000]">-32.81</span>
                <span className="w-[87px] text-[#008000]">-0.97%</span>
                <span className="w-[94px] font-bold">3538<span className="text-[23px] font-normal">亿</span></span>
                <span className="w-[54px] text-[23px]">沪深</span>
                <span className="w-[94px] text-[#008000]">4563.77</span>
                <span className="w-[81px] text-[#008000]">-56.11</span>
                <span className="w-[87px] text-[#008000]">-1.21%</span>
                <span className="w-[96px] font-bold">2640<span className="text-[23px] font-normal">亿</span></span>
                <span className="w-[54px] text-[23px]">创业</span>
                <span className="w-[108px] text-[#f01010]">2908.94</span>
                <span className="w-[70px] text-[#f01010]">2.18</span>
                <span className="w-[84px] text-[#f01010]">0.07%</span>
                <span className="w-[98px] font-bold">1811<span className="text-[23px] font-normal">亿</span></span>
                <span className="w-[87px] pl-[3px] h-full border-l-2 border-[#b0b0b0] text-[23px]">总成交</span>
                <span>8</span>
            </div>

            {/* IME status bar floating over the tick list */}
            <div className="absolute left-[1787px] top-[1197px] flex items-center gap-[1px] w-[158px] h-[26px] px-[2px] bg-[#ece9d8] border border-[#808080] text-[#101010]">
                <span className="flex items-center justify-center w-[20px] h-[20px] bg-[#c8c8c8] text-[16px] font-bold text-[#a01010]">A</span>
                <span className="flex items-center justify-center w-[70px] h-[20px] bg-[#c8c8c8] text-[17px] whitespace-nowrap">极品五笔</span>
                <span className="flex items-center justify-center w-[19px] h-[20px] bg-[#c8c8c8]">
                    <svg width="12" height="14" viewBox="0 0 12 14"><path d="M7 1 C2 3 2 10 5 12 C8 13 10 12 11 10 C6 11 5 6 7 1 Z" fill="#101010" /></svg>
                </span>
                <span className="flex items-center justify-center w-[19px] h-[20px] bg-[#c8c8c8] text-[12px] font-bold">·,</span>
                <span className="flex items-center justify-center w-[19px] h-[20px] bg-[#c8c8c8]">
                    <svg width="17" height="13" viewBox="0 0 17 13"><rect width="17" height="13" fill="#e8e8e8" /><path d="M0 3h17M0 6h17M0 9h17M3 0v13M6 0v13M9 0v13M12 0v13" stroke="#808080" strokeWidth="0.7" /></svg>
                </span>
            </div>

            {/* site watermark pasted over the corner */}
            <div className="absolute left-[1360px] top-[1314px] flex items-center w-[800px] h-[81px] bg-[#7fa9d9] overflow-hidden">
                <span className="ml-[18px] w-[285px] text-[55px] leading-none font-bold text-[#14148c] whitespace-nowrap">公式指标网</span>
                <svg width="80" height="80" viewBox="0 0 80 80" className="shrink-0 ml-[20px]">
                    <path d="M4 38 A34 34 0 0 1 28 6" fill="none" stroke="#d9604f" strokeWidth="8" />
                    <path d="M52 6 A34 34 0 0 1 76 38" fill="none" stroke="#d9604f" strokeWidth="8" />
                    <path d="M76 44 A34 34 0 0 1 40 78" fill="none" stroke="#eecb46" strokeWidth="8" />
                    <path d="M32 1 H48 V14 L58 20 V60 H47 L44 44 H36 L33 60 H22 V20 L32 14 Z" fill="#eecb46" />
                    <path d="M36 3 H44 V8 H36 Z M27 30 H37 V34 H27 Z M43 30 H53 V34 H43 Z M38 38 H42 V44 H38 Z" fill="#7fa9d9" />
                    <path id="medal-arc" d="M6 44 A34 34 0 0 0 36 76" fill="none" />
                    <text fontSize="8" fill="#fff"><textPath href="#medal-arc">www.9m8.cn</textPath></text>
                </svg>
                <span className="ml-[25px] text-[54px] leading-none font-bold text-white whitespace-nowrap font-['DejaVu_Serif',serif] tracking-[-3px]">www.9m8.cn</span>
            </div>
        </div>
    );
}
